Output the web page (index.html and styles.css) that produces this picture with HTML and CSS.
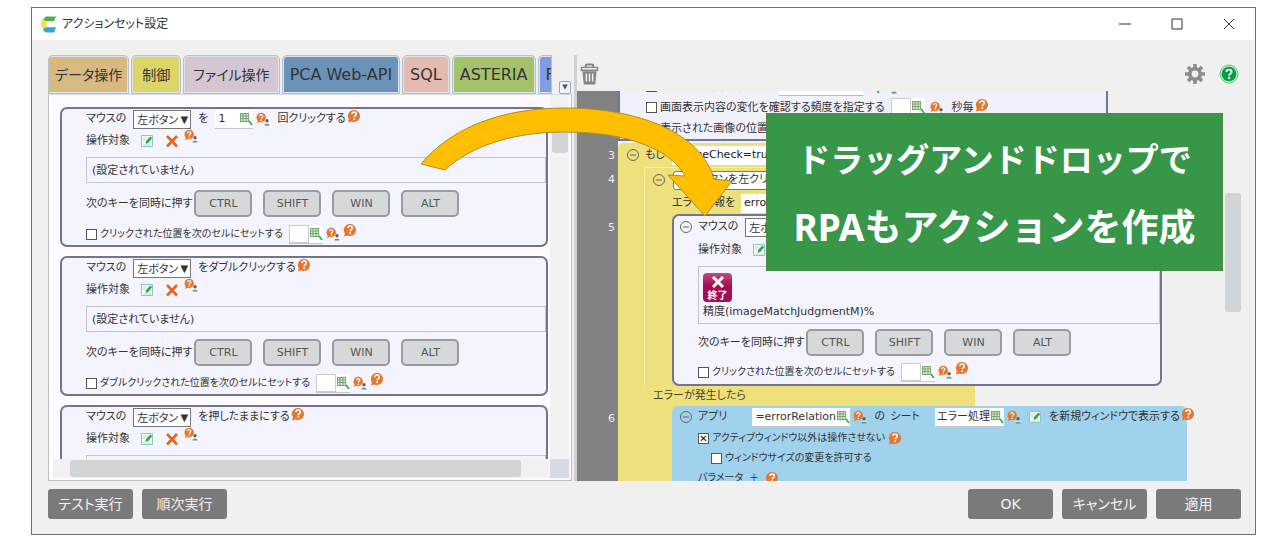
FILE: index.html
```html
<!DOCTYPE html>
<html lang="ja">
<head>
<meta charset="utf-8">
<title>アクションセット設定</title>
<link rel="stylesheet" href="styles.css">
</head>
<body>
<svg class="defs" aria-hidden="true">
  <symbol id="i-help" viewBox="0 0 14 14"><path d="M7 1a6 6 0 1 1-2.400 11.500L1 13.500l.8-3.300A6 6 0 0 1 7 1z" fill="#e8772e"/><path d="M4.900 5.100C5 3.600 6 3 7.100 3c1.300 0 2.200.8 2.200 1.900C9.300 6.500 7.300 6.600 7.200 8.300" fill="none" stroke="#fff" stroke-width="1.500"/><circle cx="7.200" cy="10.300" r="1" fill="#fff"/></symbol>
  <symbol id="i-who" viewBox="0 0 14 14"><circle cx="5.200" cy="5.500" r="4.700" fill="#e8772e"/><path d="M2 8l-1.300 3 3.500-1.200z" fill="#e8772e"/><path d="M3.600 4.300c.2-2.300 3.400-1.900 3.200 0-.1 1.200-1.500 1.100-1.500 2.500" fill="none" stroke="#fff" stroke-width="1.200"/><circle cx="5.300" cy="8.300" r=".8" fill="#fff"/><circle cx="11" cy="8.800" r="1.700" fill="#7a5a48"/><path d="M8.500 13.500c0-3.500 5-3.500 5 0z" fill="#5f9a7e"/><path d="M8.500 11.300h5" stroke="#fff" stroke-width=".8"/></symbol>
  <symbol id="i-cell" viewBox="0 0 14 14"><path d="M1 1h9v9H1z" fill="#dcebd7"/><path d="M1 1.500h9M1 4h9M1 6.500h9M1 9.500h9M1.500 1v9M4 1v9M7 1v9M9.700 1v9" stroke="#7aa574" fill="none"/><path d="M10 9l3 4" stroke="#35b44a" stroke-width="1.800" fill="none"/></symbol>
  <symbol id="i-edit" viewBox="0 0 14 14"><path d="M1.500 1.500h11v11h-11z" fill="#f4fbfa" stroke="#8ac6c4"/><path d="M3 4h4M3 6h2M3 11h8" stroke="#b9dcd6"/><path d="M5.500 9.700L6 7l4.200-4.500L12.300 4 8.300 9z" fill="#3fa34a"/></symbol>
  <symbol id="i-del" viewBox="0 0 14 14"><path d="M2 2l10 10.500M12 2L2 12.500" stroke="#e5651b" stroke-width="2.600" fill="none"/></symbol>
  <symbol id="i-fold" viewBox="0 0 14 14"><circle cx="7" cy="7" r="5.500" fill="none" stroke="currentColor"/><path d="M4 7h6" stroke="currentColor"/></symbol>
</svg>

<div class="window">
  <header class="titlebar">
    <svg class="logo" viewBox="0 0 16 17" aria-hidden="true"><path d="M5 0h11l-2 5H5.500L2 3.500z" fill="#52ac5b"/><path d="M2 3l4 2v6l-3.500 2.500Q0 12 0 9V6q0-2 2-3z" fill="#f2df4c"/><path d="M5.500 11.500H16L14 17H5.500Q3 16 2 13.500z" fill="#2fa5d8"/></svg>
    <h1 class="title">アクションセット設定</h1>
    <div class="caption">
      <button class="cap" aria-label="最小化"><svg viewBox="0 0 12 12"><path d="M0 6h12"/></svg></button>
      <button class="cap" aria-label="最大化"><svg viewBox="0 0 12 12"><path d="M1 1h10v10H1z"/></svg></button>
      <button class="cap" aria-label="閉じる"><svg viewBox="0 0 12 12"><path d="M1 1l10 10M11 1L1 11"/></svg></button>
    </div>
  </header>

  <main class="workspace">
    <section class="palette">
      <nav class="tabs">
        <button class="tab tan">データ操作</button>
        <button class="tab yellow">制御</button>
        <button class="tab mauve">ファイル操作</button>
        <button class="tab blue">PCA Web-API</button>
        <button class="tab pink">SQL</button>
        <button class="tab green">ASTERIA</button>
        <button class="tab indigo">F</button>
        <button class="more" aria-label="タブ一覧">▼</button>
      </nav>
      <div class="pane">
        <div class="cards">
          <article class="card">
            <div class="row head">
              <label for="b1">マウスの</label>
              <span class="pick"><select id="b1"><option>左ボタン</option></select></span>
              <span>を</span>
              <span class="cell"><input class="count" aria-label="回数" value="1"><svg class="ico"><use href="#i-cell"/></svg></span>
              <svg class="ico"><use href="#i-who"/></svg>
              <span class="tipped">回クリックする<svg class="ico"><use href="#i-help"/></svg></span>
            </div>
            <div class="row target"><span>操作対象</span><svg class="ico"><use href="#i-edit"/></svg><svg class="ico del"><use href="#i-del"/></svg><svg class="ico up"><use href="#i-who"/></svg></div>
            <div class="well">(設定されていません)</div>
            <div class="row keys"><span>次のキーを同時に押す</span><button class="key">CTRL</button><button class="key">SHIFT</button><button class="key">WIN</button><button class="key">ALT</button></div>
            <div class="row check"><input type="checkbox" id="c1"><label for="c1">クリックされた位置を次のセルにセットする</label><span class="cell"><input class="ref" aria-label="セル"><svg class="ico"><use href="#i-cell"/></svg></span><svg class="ico"><use href="#i-who"/></svg><svg class="ico up"><use href="#i-help"/></svg></div>
          </article>
          <article class="card">
            <div class="row head">
              <label for="b2">マウスの</label>
              <span class="pick"><select id="b2"><option>左ボタン</option></select></span>
              <span class="tipped">をダブルクリックする<svg class="ico"><use href="#i-help"/></svg></span>
            </div>
            <div class="row target"><span>操作対象</span><svg class="ico"><use href="#i-edit"/></svg><svg class="ico del"><use href="#i-del"/></svg><svg class="ico up"><use href="#i-who"/></svg></div>
            <div class="well">(設定されていません)</div>
            <div class="row keys"><span>次のキーを同時に押す</span><button class="key">CTRL</button><button class="key">SHIFT</button><button class="key">WIN</button><button class="key">ALT</button></div>
            <div class="row check"><input type="checkbox" id="c2"><label for="c2">ダブルクリックされた位置を次のセルにセットする</label><span class="cell"><input class="ref" aria-label="セル"><svg class="ico"><use href="#i-cell"/></svg></span><svg class="ico"><use href="#i-who"/></svg><svg class="ico up"><use href="#i-help"/></svg></div>
          </article>
          <article class="card">
            <div class="row head">
              <label for="b3">マウスの</label>
              <span class="pick"><select id="b3"><option>左ボタン</option></select></span>
              <span class="tipped">を押したままにする<svg class="ico"><use href="#i-help"/></svg></span>
            </div>
            <div class="row target"><span>操作対象</span><svg class="ico"><use href="#i-edit"/></svg><svg class="ico del"><use href="#i-del"/></svg><svg class="ico up"><use href="#i-who"/></svg></div>
            <div class="well"></div>
          </article>
        </div>
        <div class="vbar"><div class="thumb"></div></div>
        <div class="hbar"><div class="thumb"></div></div>
        <div class="corner"></div>
      </div>
    </section>

    <section class="editor">
      <div class="tools">
        <button class="tool" aria-label="削除"><svg class="trash" viewBox="0 0 20 24"><path d="M6 5V3.500Q6 2 7.500 2h5Q14 2 14 3.500V5" fill="none" stroke="#858585" stroke-width="2"/><path d="M1.500 5h17v3h-17z" fill="#f0f0f0" stroke="#858585" stroke-width="1.500"/><path d="M2.500 9h15L16 23H4z" fill="#858585"/><path d="M6.700 11.500v8.500M10 11.500v8.500M13.300 11.500v8.500" stroke="#f0f0f0" stroke-width="1.500"/></svg></button>
        <span class="space"></span>
        <button class="tool" aria-label="設定"><svg class="gear" viewBox="0 0 20 20"><circle cx="10" cy="10" r="5.200" fill="none" stroke="#8c8c8c" stroke-width="3.600"/><path d="M10 0v4M10 16v4M0 10h4M16 10h4M3 3l2.800 2.800M14.200 14.200L17 17M17 3l-2.800 2.800M5.800 14.200L3 17" stroke="#8c8c8c" stroke-width="3.600"/></svg></button>
        <button class="tool" aria-label="ヘルプ"><svg class="gear" viewBox="0 0 20 20"><circle cx="10" cy="10" r="9" fill="#b9e8c8" stroke="#62cb88"/><circle cx="10" cy="10" r="7.300" fill="#0b9c45"/><path d="M7.400 8c.1-3.200 5.300-3 5.200 0 0 1.700-2.500 1.700-2.500 3.700" fill="none" stroke="#fff" stroke-width="1.800"/><circle cx="10.100" cy="14" r="1.200" fill="#fff"/></svg></button>
      </div>
      <div class="canvas">
        <ol class="gutter"><li class="n3">3</li><li class="n4">4</li><li class="n5">5</li><li class="n6">6</li></ol>
        <div class="flow">
          <div class="watch">
            <div class="row opt"><input type="checkbox" id="w1"><label for="w1">検索する範囲を指定する</label><input class="wide" aria-label="範囲"><svg class="ico"><use href="#i-cell"/></svg><svg class="ico"><use href="#i-who"/></svg></div>
            <div class="row opt"><input type="checkbox" id="w2"><label for="w2">画面表示内容の変化を確認する頻度を指定する</label><span class="cell"><input class="ref" aria-label="頻度"><svg class="ico"><use href="#i-cell"/></svg></span><svg class="ico"><use href="#i-who"/></svg><span class="tipped">秒毎<svg class="ico"><use href="#i-help"/></svg></span></div>
            <div class="row opt"><input type="checkbox" id="w3"><label for="w3">表示された画像の位置</label></div>
          </div>
          <div class="branch">
            <div class="row if"><svg class="ico"><use href="#i-fold"/></svg><label for="cond">もし</label><input class="expr" id="cond" value="imageCheck=true"></div>
            <div class="inner">
              <div class="row step"><svg class="ico"><use href="#i-fold"/></svg><input class="name" aria-label="アクション名" value="ボタンを左クリック"></div>
              <div class="row err"><label for="err">エラー情報を</label><input class="expr" id="err" value="errorInfo"></div>
              <article class="card placed">
                <div class="row head">
                  <svg class="ico fold"><use href="#i-fold"/></svg>
                  <label for="b4">マウスの</label>
                  <span class="pick"><select id="b4"><option>左ボタン</option></select></span>
                </div>
                <div class="row target"><span>操作対象</span><svg class="ico"><use href="#i-edit"/></svg></div>
                <div class="well shot">
                  <div class="badge"><svg viewBox="0 0 14 12" aria-hidden="true"><path d="M2 1l10 10M12 1L2 11"/></svg><span>終了</span></div>
                  <div>精度(imageMatchJudgmentM)%</div>
                </div>
                <div class="row keys"><span>次のキーを同時に押す</span><button class="key">CTRL</button><button class="key">SHIFT</button><button class="key">WIN</button><button class="key">ALT</button></div>
                <div class="row check"><input type="checkbox" id="c4"><label for="c4">クリックされた位置を次のセルにセットする</label><span class="cell"><input class="ref" aria-label="セル"><svg class="ico"><use href="#i-cell"/></svg></span><svg class="ico"><use href="#i-who"/></svg><svg class="ico up"><use href="#i-help"/></svg></div>
              </article>
            </div>
            <div class="catch">エラーが発生したら</div>
            <div class="app">
              <div class="row apphead">
                <svg class="ico fold"><use href="#i-fold"/></svg>
                <label for="app">アプリ</label>
                <span class="cell rel"><input id="app" value="=errorRelation"><svg class="ico"><use href="#i-cell"/></svg></span>
                <svg class="ico"><use href="#i-who"/></svg>
                <label for="sheet">の&ensp;シート</label>
                <span class="cell sheet"><input id="sheet" value="エラー処理"><svg class="ico"><use href="#i-cell"/></svg></span>
                <svg class="ico"><use href="#i-who"/></svg>
                <svg class="ico"><use href="#i-edit"/></svg>
                <span class="tipped">を新規ウィンドウで表示する<svg class="ico"><use href="#i-help"/></svg></span>
              </div>
              <div class="row opt"><input type="checkbox" id="a1" checked><label for="a1">アクティブウィンドウ以外は操作させない</label><svg class="ico"><use href="#i-help"/></svg></div>
              <div class="row opt sub"><input type="checkbox" id="a2"><label for="a2">ウィンドウサイズの変更を許可する</label></div>
              <div class="row opt param"><span>パラメータ</span><span>＋</span><svg class="ico"><use href="#i-help"/></svg></div>
            </div>
          </div>
        </div>
        <div class="rbar"><div class="thumb"></div></div>
      </div>
    </section>
  </main>

  <footer class="footer">
    <button class="btn">テスト実行</button>
    <button class="btn">順次実行</button>
    <span class="space"></span>
    <button class="btn">OK</button>
    <button class="btn">キャンセル</button>
    <button class="btn">適用</button>
  </footer>

  <svg class="arrow" viewBox="0 0 314 112" aria-hidden="true"><path d="M2 58C32 22 82 2 146 2C218 2 282 26 295 73L313 75L286 110L249 69L266 70C252 44 210 26 146 26C98 26 54 38 26 64Z"/></svg>
  <div class="banner"><p class="lead">ドラッグアンドドロップで</p><p>RPAもアクションを作成</p></div>
</div>
</body>
</html>
```
FILE: styles.css
```css
* { box-sizing: border-box; }

body {
  margin: 0;
  padding: 7px 24px 4px 31px;
  background: #fff;
  color: #333;
  font: 11px/20px "DejaVu Sans", "Noto Sans CJK JP", sans-serif;
  font-feature-settings: "palt";
  overflow: hidden;
}

button, input, select {
  font: inherit;
  font-feature-settings: inherit;
  color: inherit;
  margin: 0;
  padding: 0;
  border: 0;
  background: none;
  border-radius: 0;
}

.defs { position: absolute; width: 0; height: 0; }
.space { flex: 1; }

/* window frame */
.window {
  position: relative;
  border: 1px solid #6f7072;
  background: #f0f0f0;
}
.titlebar {
  display: flex;
  align-items: center;
  height: 32px;
  padding-left: 9px;
  background: #fff;
}
.logo { width: 15px; height: 17px; margin-right: 6px; }
.title { flex: 1; margin: 0; font-size: 12px; font-weight: 400; }
.caption { display: flex; }
.cap { display: grid; place-items: center; width: 52px; height: 31px; }
.cap svg { width: 12px; height: 12px; fill: none; stroke: #333; }

.workspace {
  display: flex;
  height: calc(100vh - 113px);
  margin: 15px 14px 0 16px;
}

/* action palette */
.palette { flex: 524; min-width: 0; display: flex; flex-direction: column; }
.tabs { display: flex; align-items: flex-end; gap: 2px; height: 39px; overflow: hidden; }
.tab {
  flex: none;
  height: 39px;
  padding: 0 6px;
  border: 2px solid #dfe3e8;
  border-radius: 5px 5px 0 0;
  outline: 1px solid #b8c0cb;
  outline-offset: -1px;
  font-size: 16px;
  white-space: nowrap;
}
.tan { padding: 0 5px; background: #d8b980; border-left-color: #d8b980; font-size: 14px; }
.yellow { padding: 0 9px; background: #dcd569; font-size: 14px; }
.mauve { padding: 0 8px; background: #d5c6d4; font-size: 14px; }
.blue { background: #6b92b7; }
.pink { background: #e4bbb1; }
.green { background: #a4c26c; }
.indigo { width: 14px; overflow: hidden; padding: 0 0 0 6px; background: #7f9de3; border-right: 0; border-radius: 5px 0 0 0; text-align: left; }
.more {
  flex: none;
  width: 12px;
  height: 13px;
  margin: 0 1px 0 auto;
  border: 1px solid #8ea9c4;
  border-radius: 2px;
  background: #edf4fb;
  color: #3c5a7c;
  font-size: 7px;
  line-height: 11px;
}
.pane {
  flex: 1;
  min-height: 0;
  display: grid;
  grid-template: minmax(0, 1fr) 19px / minmax(0, 1fr) 19px;
  padding: 0 2px 2px 4px;
  border: 1px solid #b9c1c6;
  border-top-color: #d5dae0;
  background: #fdfbff;
}
.cards { padding: 12px 2px 0 7px; overflow: hidden; }
.card {
  min-height: 139px;
  margin-bottom: 9px;
  padding-left: 24px;
  border: 2px solid #71758f;
  border-radius: 7px;
  background: #f4f4fe;
}
.vbar { padding: 16px 1px 0 2px; background: #f1f2f2; }
.thumb { border-radius: 3px; background: #d1d4d7; }
.vbar .thumb { height: 42px; }
.hbar { padding: 1px 29px 1px 17px; background: #f1f1f3; }
.hbar .thumb { height: 17px; }
.corner { background: #d5dae5; }

/* card rows */
.row { display: flex; align-items: center; white-space: nowrap; }
.ico { flex: none; width: 14px; height: 14px; }
.head { height: 20px; gap: 7px; }
.head .ico { margin-left: -4px; }
.pick { position: relative; }
.pick::after { content: "▼"; position: absolute; right: 3px; top: 0; font-size: 10px; pointer-events: none; }
.pick select {
  display: block;
  width: 58px;
  height: 19px;
  padding-left: 3px;
  appearance: none;
  border: 1px solid #777;
  background: #fff;
}
.tipped { display: inline-flex; }
.head .tipped .ico, .tipped .ico { margin: 0 0 0 1px; }
.cell { display: inline-flex; align-items: center; height: 19px; background: #fff; border-bottom: 1px solid #c8c8cc; }
.cell input { min-width: 0; }
.count { width: 24px; padding-left: 3px; }
.head .cell .ico { margin-left: 0; }
.target { height: 24px; gap: 10px; }
.target .del { margin-left: 1px; }
.target .up { margin-left: -5px; }
.up { align-self: flex-start; }
.well { height: 26px; margin-top: 4px; padding: 3px 5px; border: 1px solid #c3c4cc; }
.keys { margin-top: 7px; gap: 11px; }
.keys span { margin-right: -9px; }
.key {
  width: 58px;
  height: 27px;
  border: 2px solid #989c9e;
  border-radius: 5px;
  background: #d6d9d9;
  color: #555;
}
.check { height: 22px; margin-top: 6px; gap: 3px; font-size: 10px; }
.check .cell { margin-left: 3px; }
.ref { width: 20px; height: 18px; border: 1px solid #ccc; }
input[type="checkbox"] {
  flex: none;
  display: grid;
  place-items: center;
  width: 11px;
  height: 11px;
  appearance: none;
  border: 1px solid #555;
  background: #fff;
}
input[type="checkbox"]:checked::after { content: "✕"; font-size: 10px; line-height: 9px; color: #111; }

/* action set editor */
.editor { flex: 664; min-width: 0; display: flex; flex-direction: column; margin-left: 2px; border-left: 3px solid #cfd1d3; }
.tools { display: flex; align-items: center; gap: 14px; height: 36px; padding: 2px 2px 0 3px; }
.tool { display: grid; }
.trash { width: 19px; height: 24px; }
.gear { width: 20px; height: 20px; }
.canvas { flex: 1; min-height: 0; display: flex; overflow: hidden; }
.gutter {
  flex: none;
  display: flex;
  flex-direction: column;
  width: 41px;
  margin: 0;
  padding: 55px 3px 0 0;
  list-style: none;
  text-align: right;
  background: #818181;
  color: #eee;
}
.gutter li { flex: none; }
.n3 { height: 24px; }
.n4 { height: 48px; }
.n5 { height: 191px; }
.flow { flex: 1; min-width: 0; }
.watch {
  display: flex;
  flex-direction: column;
  justify-content: flex-end;
  width: 490px;
  height: 50px;
  padding-left: 26px;
  border: solid #71758f;
  border-width: 0 2px 2px;
  background: #f1f1fb;
  overflow: hidden;
}
.opt { flex: none; height: 21px; gap: 3px; }
.opt .cell { margin: 0 2px 0 3px; }
.opt .tipped { margin-left: 5px; }
.wide { width: 84px; height: 19px; background: #fff; border-bottom: 1px solid #bbb; }
.branch { width: 357px; margin-top: 2px; border-radius: 5px 5px 0 0; background: #eee07c; }
.if { height: 24px; padding-left: 8px; gap: 5px; }
.if .ico, .step .ico, .fold { color: #666; }
.expr { width: 150px; height: 19px; padding-left: 3px; background: #fff; color: #222; }
.if .expr { margin-left: 2px; }
.inner { margin-left: 26px; border: solid #f7efad; border-width: 1px 0 0 1px; border-radius: 4px 0 0 0; }
.step { height: 24px; gap: 7px; padding-left: 7px; }
.name { width: 160px; height: 19px; border: 1px solid #71758f; border-radius: 3px; background: #fff; padding-left: 24px; }
.err { height: 22px; padding-left: 27px; gap: 6px; }
.placed { width: 490px; min-height: 172px; margin: 0 0 0 27px; }
.placed .head { height: 22px; }
.placed .fold, .apphead .fold { margin: 0 -2px 0 -19px; }
.shot { height: 58px; padding: 6px 4px; }
.badge {
  display: grid;
  justify-items: center;
  width: 29px;
  height: 29px;
  padding-top: 3px;
  border-radius: 4px;
  background: linear-gradient(#bd4a86, #a50d52 45%);
  color: #fff;
  font-size: 10px;
  font-weight: 700;
  line-height: 11px;
}
.badge svg { width: 14px; height: 12px; fill: none; stroke: #fff; stroke-width: 3; }
.placed .keys, .placed .check { margin-top: 5px; }
.catch { height: 20px; padding-left: 35px; color: #4a4624; }
.app { width: 515px; height: 90px; margin-left: 54px; padding-left: 26px; border-radius: 6px 6px 0 0; background: #a1d2ed; }
.apphead { height: 22px; gap: 7px; }
.rel { margin-left: 18px; }
.rel input { width: 84px; padding-left: 3px; }
.sheet { margin-left: 8px; }
.sheet input { width: 55px; padding-left: 2px; }
.apphead .cell + .ico { margin-left: -4px; }
.app .opt { height: 20px; font-size: 10px; }
.sub { padding-left: 13px; }
.param { gap: 6px; }
.rbar { flex: none; width: 16px; padding-top: 102px; }
.rbar .thumb { height: 119px; }

/* dialog buttons */
.footer { display: flex; gap: 9px; padding: 8px 14px 15px 16px; }
.btn { width: 85px; height: 30px; border-radius: 3px; background: #7a7a7a; color: #f2f2f2; font-size: 14px; }

/* callout over the window */
.arrow { position: absolute; left: 387px; top: 98px; width: 314px; height: 112px; fill: #ffbe00; stroke: #a98f2a; }
.banner {
  position: absolute;
  right: 32px;
  top: 105px;
  width: 457px;
  height: 158px;
  padding: 13px 0;
  border: 1px solid #4c8a45;
  background: #379647;
  color: #fff;
  font: 700 37px/68px "Noto Sans", "Noto Sans CJK JP", sans-serif;
  text-align: center;
  white-space: nowrap;
}
.banner p { margin: 0; }
.banner .lead { font-size: 33px; line-height: 66px; }
```
